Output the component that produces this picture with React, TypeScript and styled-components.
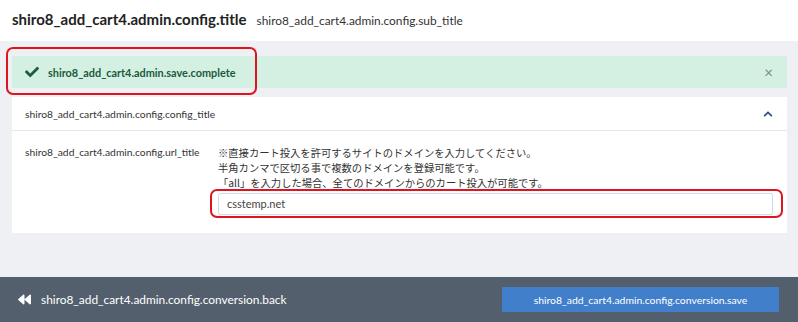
import * as React from 'react';
import styled, { createGlobalStyle } from 'styled-components';
import { FaCheck, FaChevronUp, FaBackward } from 'react-icons/fa';

const GlobalStyle = createGlobalStyle`
  html, body {
    margin: 0;
    padding: 0;
    background: #ffffff;
  }
  body {
    font-family: Lato, "Noto Sans CJK JP", sans-serif;
    color: #333333;
  }
`;

const Page = styled.div`
  width: 798px;
  height: 322px;
  display: flex;
  flex-direction: column;
  overflow: hidden;
`;

const Header = styled.div`
  height: 41px;
  display: flex;
  align-items: baseline;
  gap: 10px;
  padding: 10px 12px 0;
  box-sizing: border-box;
  background: #ffffff;
`;

const Title = styled.h1`
  margin: 0;
  font-size: 15px;
  font-weight: 700;
  color: #222;
`;

const SubTitle = styled.span`
  font-size: 11.9px;
  color: #333;
`;

const Main = styled.div`
  flex: 1;
  background: #eff0f4;
  padding: 15px 11px 0 12px;
  display: flex;
  flex-direction: column;
  gap: 9px;
`;

const Alert = styled.div`
  position: relative;
  height: 32px;
  display: flex;
  align-items: center;
  padding: 0 14px 0 13px;
  background: #d4f0e3;
  color: #1c5a3c;
  font-size: 10.9px;
  font-weight: 700;
`;

const AlertIcon = styled.span`
  display: flex;
  font-size: 14px;
  color: #1d5c3f;
  margin-right: 9px;
`;

const AlertText = styled.span`
  flex: 1;
`;

const Close = styled.span`
  font-size: 15px;
  font-weight: 400;
  color: #7b8a84;
`;

const Highlight = styled.div<{ $top: number; $left: number; $width: number; $height: number }>`
  position: absolute;
  top: ${p => p.$top}px;
  left: ${p => p.$left}px;
  width: ${p => p.$width}px;
  height: ${p => p.$height}px;
  border: 2px solid #e0141e;
  border-radius: 7px;
  box-sizing: border-box;
  pointer-events: none;
`;

const Card = styled.div`
  background: #ffffff;
`;

const CardHeader = styled.div`
  height: 33px;
  display: flex;
  align-items: center;
  justify-content: space-between;
  padding: 0 14px 0 13px;
  border-bottom: 1px solid #e4e6ea;
  font-size: 10.3px;
`;

const Chevron = styled.span`
  display: flex;
  font-size: 10px;
  color: #2b4c7e;
`;

const CardBody = styled.div`
  display: grid;
  grid-template-columns: 193px 1fr;
  padding: 14px 14px 18px 13px;
`;

const Label = styled.div`
  font-size: 10.3px;
  line-height: 15px;
`;

const Field = styled.div`
  display: flex;
  flex-direction: column;
`;

const Note = styled.p`
  margin: 0;
  font-family: "Noto Sans CJK JP", sans-serif;
  font-size: 10.3px;
  line-height: 15px;
  color: #333;
`;

const InputWrap = styled.div`
  position: relative;
  margin-top: 2px;
`;

const Input = styled.input`
  width: 100%;
  height: 22px;
  box-sizing: border-box;
  border: 1px solid #d6dae6;
  border-radius: 2px;
  padding: 0 8px;
  font-family: Lato, sans-serif;
  font-size: 11px;
  color: #444;
  outline: none;
`;

const Footer = styled.div`
  height: 45px;
  flex-shrink: 0;
  display: flex;
  align-items: center;
  justify-content: space-between;
  padding: 0 19px 0 18px;
  background: #535f6d;
`;

const Back = styled.a`
  display: flex;
  align-items: center;
  gap: 10px;
  color: #ffffff;
  font-size: 11.9px;
  text-decoration: none;
`;

const SaveButton = styled.button`
  width: 277px;
  height: 25px;
  border: none;
  background: #427fca;
  color: #ffffff;
  font-family: Lato, sans-serif;
  font-size: 10.4px;
`;

export default function App() {
  return (
    <Page>
      <GlobalStyle />
      <Header>
        <Title>shiro8_add_cart4.admin.config.title</Title>
        <SubTitle>shiro8_add_cart4.admin.config.sub_title</SubTitle>
      </Header>
      <Main>
        <Alert>
          <AlertIcon><FaCheck /></AlertIcon>
          <AlertText>shiro8_add_cart4.admin.save.complete</AlertText>
          <Close>×</Close>
          <Highlight $top={-9} $left={-6} $width={251} $height={48} />
        </Alert>
        <Card>
          <CardHeader>
            <span>shiro8_add_cart4.admin.config.config_title</span>
            <Chevron><FaChevronUp /></Chevron>
          </CardHeader>
          <CardBody>
            <Label>shiro8_add_cart4.admin.config.url_title</Label>
            <Field>
              <Note>※直接カート投入を許可するサイトのドメインを入力してください。</Note>
              <Note>半角カンマで区切る事で複数のドメインを登録可能です。</Note>
              <Note>「all」を入力した場合、全てのドメインからのカート投入が可能です。</Note>
              <InputWrap>
                <Input defaultValue="csstemp.net" />
                <Highlight $top={-3} $left={-8} $width={573} $height={29} />
              </InputWrap>
            </Field>
          </CardBody>
        </Card>
      </Main>
      <Footer>
        <Back href="#">
          <FaBackward size={13} />
          shiro8_add_cart4.admin.config.conversion.back
        </Back>
        <SaveButton>shiro8_add_cart4.admin.config.conversion.save</SaveButton>
      </Footer>
    </Page>
  );
}
